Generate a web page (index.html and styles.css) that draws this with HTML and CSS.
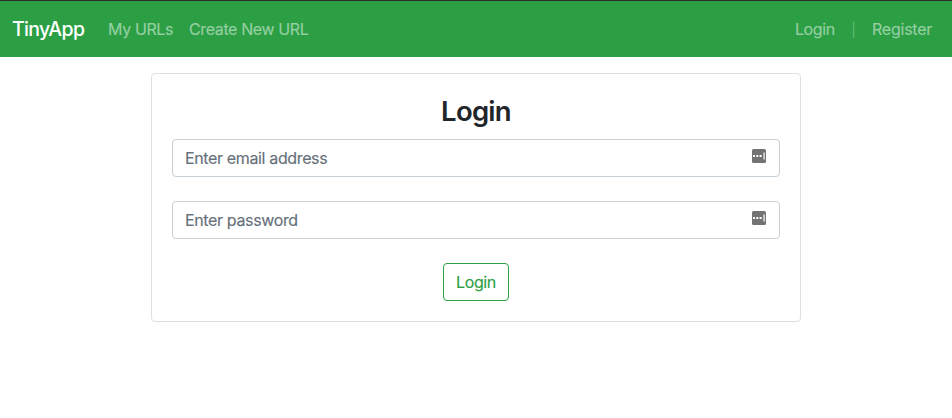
FILE: index.html
```html
<!DOCTYPE html>
<html lang="en">
<head>
<meta charset="utf-8">
<title>TinyApp</title>
<link rel="stylesheet" href="styles.css">
</head>
<body>
<nav class="navbar">
  <a class="brand">TinyApp</a>
  <a class="nav-link urls">My URLs</a>
  <a class="nav-link create">Create New URL</a>
  <div class="account">
    <a class="nav-link login">Login</a>
    <span class="nav-link divider">|</span>
    <a class="nav-link register">Register</a>
  </div>
</nav>
<main class="card">
  <h1 class="title">Login</h1>
  <form class="form">
    <div class="field">
      <input class="input" type="email" placeholder="Enter email address">
      <svg class="key-icon" viewBox="0 0 14 14"><rect width="14" height="14" rx="1.5" fill="#737373"/><path d="M1 6h2v2H1zM4.3 6h2v2h-2zM7.6 6h2v2h-2zM11.5 3.5h1.2v7h-1.2z" fill="#fff"/></svg>
    </div>
    <div class="field">
      <input class="input" type="password" placeholder="Enter password">
      <svg class="key-icon" viewBox="0 0 14 14"><rect width="14" height="14" rx="1.5" fill="#737373"/><path d="M1 6h2v2H1zM4.3 6h2v2h-2zM7.6 6h2v2h-2zM11.5 3.5h1.2v7h-1.2z" fill="#fff"/></svg>
    </div>
    <button class="submit" type="button">Login</button>
  </form>
</main>
</body>
</html>
```
FILE: styles.css
```css
* { box-sizing: border-box; }
body {
  margin: 0;
  background: #fff;
  color: #212529;
  font: 16px/24px Inter, "Liberation Sans", sans-serif;
}
.navbar {
  display: flex;
  align-items: center;
  height: 57px;
  padding: 0 20px 1px 12px;
  border-top: 1px solid #2b2b2b;
  background: #2c9f45;
  white-space: nowrap;
}
.brand { width: 96px; color: #fff; font-size: 19.5px; font-weight: 500; letter-spacing: -0.65px; }
.nav-link { color: #95cfa2; letter-spacing: -0.38px; -webkit-text-stroke: 0.15px; }
.urls { width: 81px; }
.account { display: flex; height: 24px; margin-left: auto; }
.login { letter-spacing: -0.4px; }
.register { letter-spacing: -0.25px; }
.divider { margin: 0 16.5px; line-height: 26px; opacity: .55; font-size: 14px; -webkit-text-stroke: 0; }
.card {
  width: 650px;
  height: 249px;
  margin: 16px auto 0;
  padding: 20px;
  border: 1px solid #dfdfdf;
  border-radius: 4px;
}
.title {
  margin: 0 0 11px;
  font-size: 27.5px;
  line-height: 34px;
  font-weight: 560;
  text-align: center;
  letter-spacing: -0.75px;
}
.form { display: flex; flex-direction: column; align-items: center; gap: 24px; }
.field {
  display: flex;
  justify-content: space-between;
  width: 608px;
  height: 38px;
  padding: 6px 13px 6px 12px;
  border: 1px solid #c7cfd6;
  border-radius: 4px;
}
.input {
  flex: 1;
  min-width: 0;
  height: 24px;
  padding: 0;
  border: 0;
  outline: 0;
  background: transparent;
  color: #495057;
  font: inherit;
  letter-spacing: -0.36px;
}
.input::placeholder { color: #66707a; opacity: 1; -webkit-text-stroke: 0.15px; }
.key-icon { width: 14px; height: 14px; margin-top: 3px; }
.submit {
  width: 66px;
  height: 38px;
  padding: 0;
  border: 1px solid #2c9f45;
  border-radius: 4px;
  background: #fff;
  color: #2c9f45;
  font: inherit;
  letter-spacing: -0.4px;
  -webkit-text-stroke: 0.15px;
}
```
